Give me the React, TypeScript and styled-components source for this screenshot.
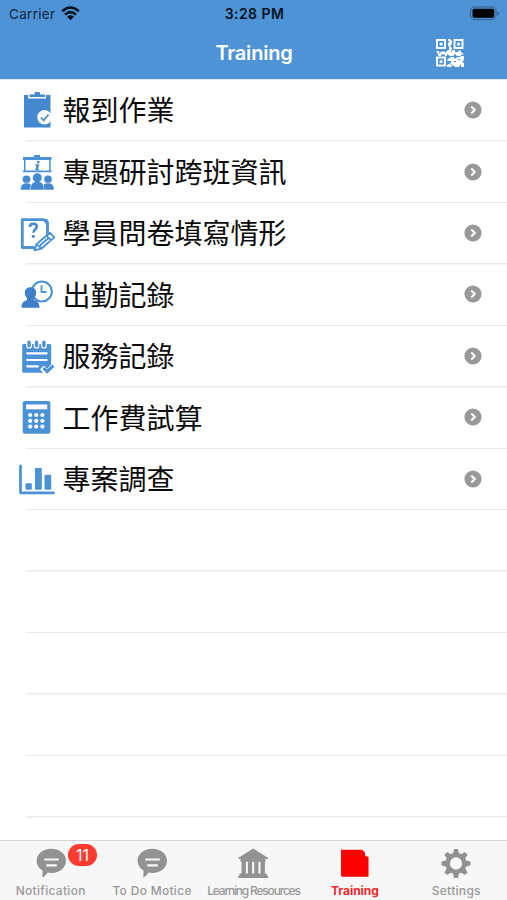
import React from 'react';
import styled, { createGlobalStyle } from 'styled-components';

const GlobalStyle = createGlobalStyle`
  * { box-sizing: border-box; }
  body { margin: 0; background: #fff; font-family: Inter, "Liberation Sans", sans-serif; }
`;

const Screen = styled.div`
  width: 507px;
  height: 900px;
  display: flex;
  flex-direction: column;
  overflow: hidden;
  background: #fff;
`;

const Header = styled.header`
  flex: none;
  height: 79px;
  background: #4d93d6;
`;

const StatusBar = styled.div`
  height: 27px;
  display: grid;
  grid-template-columns: 1fr auto 1fr;
  align-items: center;
  padding: 0 7px 0 9px;
`;

const Carrier = styled.div`
  display: flex;
  align-items: center;
  gap: 6px;
  font-size: 13.5px;
  letter-spacing: 0.3px;
  color: #14283c;
`;

const Clock = styled.div`
  font-size: 14px;
  font-weight: 600;
  letter-spacing: 0.42px;
  color: #07121d;
`;

const BatteryIcon = styled.svg`
  justify-self: end;
`;

const NavBar = styled.div`
  height: 51px;
  display: grid;
  grid-template-columns: 1fr auto 1fr;
  align-items: center;
  padding: 0 43px 0 44px;
`;

const Title = styled.h1`
  grid-column: 2;
  margin: 0;
  font-size: 20px;
  line-height: 24px;
  font-weight: 600;
  letter-spacing: -0.2px;
  color: #fff;
`;

const ScanIcon = styled.svg`
  justify-self: end;
`;

const List = styled.main`
  flex: 1;
  min-height: 0;
  overflow: hidden;
  padding-top: 0.4px;
  border-top: 1px solid #dfe7f0;
`;

const Row = styled.div`
  height: 61.45px;
  display: flex;
  align-items: center;
  padding: 0 25px 2px 16px;
  background: linear-gradient(#ebebec, #ebebec) 26px 100% / 100% 1.5px no-repeat;
`;

const RowIcon = styled.svg`
  flex: none;
  width: 40px;
  height: 40px;
  margin-right: 6.5px;
`;

const RowLabel = styled.span`
  flex: 1;
  padding-bottom: 1.6px;
  font-family: "Noto Sans CJK TC", sans-serif;
  font-size: 28px;
  line-height: 40px;
  color: #0a0a0a;
`;

const TabBar = styled.nav`
  flex: none;
  height: 60px;
  display: grid;
  grid-template-columns: repeat(5, 1fr);
  border-top: 1px solid #d5d5d6;
  background: #f7f7f7;
`;

const Tab = styled.div<{ $active?: boolean }>`
  position: relative;
  display: flex;
  flex-direction: column;
  align-items: center;
  color: ${p => (p.$active ? '#ff0000' : '#929292')};
`;

const TabIcon = styled.svg`
  width: 36px;
  height: 36px;
  margin-top: 5px;
`;

const TabLabel = styled.span<{ $spacing: number; $bold?: boolean }>`
  margin-top: 1px;
  font-size: 12px;
  line-height: 16px;
  font-weight: ${p => (p.$bold ? 700 : 500)};
  letter-spacing: ${p => p.$spacing}px;
  white-space: nowrap;
  color: ${p => (p.$bold ? '#f5262b' : '#989898')};
`;

const Badge = styled.span`
  position: absolute;
  top: 3px;
  left: 68px;
  width: 29px;
  height: 22px;
  border-radius: 11px;
  background: #ff3b30;
  color: #fff;
  font-size: 16px;
  line-height: 22px;
  text-align: center;
`;

const BLUE = '#4488cf';
const LIGHT = '#4a91d6';

const CheckIn = () => (
  <RowIcon viewBox="0 0 40 40">
    <path fill={BLUE} d="M8 5h4v3.5h18V5h4.5v32.5H8zM13.5 4.5h5V3q0-1 1-1h3.5q1 0 1 1v1.5h5V7h-15.5z" />
    <circle cx="28.5" cy="27.3" r="7.2" fill="#fff" />
    <path d="M24.8 27.5l2.8 3 5-6" fill="none" stroke={BLUE} strokeWidth="1.6" />
  </RowIcon>
);

const Seminar = () => (
  <RowIcon viewBox="0 0 40 40">
    <path fill={LIGHT} d="M7 5h11V3h6v2h11.5v3H7zM8 8h1.5v11H8zM33.2 8h1.5v11h-1.5zM7 18.5h28.5v1.8H7z" />
    <path fill={BLUE} d="M21 9h2.4v2.2H21zM19.5 12.2h3.7L22 17h1.2v1.2h-4L20.4 13.5h-1.2z" />
    <g fill={BLUE} stroke="#fff" strokeWidth=".5">
      <circle cx="10.5" cy="27.3" r="4.1" />
      <path d="M4.5 38c0-5 2-7 6-7s6.500 2 6.500 7z" />
      <circle cx="32" cy="27.3" r="4.1" />
      <path d="M26 38c0-5 2-7 6-7s6 2 6 7z" />
      <path d="M14.5 38c0-6 2-8.500 6.800-8.500S28 32 28 38z" />
      <circle cx="21.3" cy="25.7" r="4.5" stroke="none" />
    </g>
  </RowIcon>
);

const Survey = () => (
  <RowIcon viewBox="0 0 40 40">
    <path d="M31.5 22.5V10.500L28 6.700H6.300V34.500H17.500" fill="none" stroke={LIGHT} strokeWidth="2.800" strokeLinejoin="round" strokeLinecap="round" />
    <path d="M27 6h4l1.500 2v5z" fill={LIGHT} />
    <path d="M13.800 14c.2-2.300 1.600-3.200 3.500-3.200 2.100 0 3.500 1.200 3.500 3 0 2.700-3.400 2.400-3.400 6" fill="none" stroke={BLUE} strokeWidth="2.500" />
    <circle cx="17.400" cy="23.300" r="1.600" fill={BLUE} />
    <path d="M18.500 37.300l1.700-5.800L33.800 19.700l4.500 4.700-12.700 11.100zM30.500 22.700l4.500 4.700M20.800 31.500l4.700 3.800M24 32.500l8-7" fill="#fff" stroke={LIGHT} strokeWidth="1.900" strokeLinejoin="round" />
  </RowIcon>
);

const Attendance = () => (
  <RowIcon viewBox="0 0 40 40">
    <circle cx="25.800" cy="17.500" r="10" fill="#fff" stroke={LIGHT} strokeWidth="2" />
    <path d="M25.500 11.300v6.700h5" fill="none" stroke={LIGHT} strokeWidth="1.800" />
    <path fill="#3f7fc9" d="M14.500 13.200c3.700 0 5.900 2.500 5.700 5.900-.1 2.200-.9 3.900-2.100 5.100v1.700c3 1 5.400 2.700 5.400 7.800H5.500c0-5.100 2.600-6.800 5.500-7.800v-1.700c-1.300-1.200-2.100-2.900-2.200-5.100-.2-3.400 2-5.900 5.700-5.900z" />
  </RowIcon>
);

const ServiceLog = () => (
  <RowIcon viewBox="0 0 40 40">
    <rect x="6.200" y="8" width="29" height="28.700" rx="1.500" fill={LIGHT} />
    <g fill={LIGHT} stroke="#fff" strokeWidth="1.200">
      <rect x="10.800" y="4" width="4.600" height="8" rx="2.300" />
      <rect x="18.200" y="4" width="4.600" height="8" rx="2.300" />
      <rect x="25.600" y="4" width="4.600" height="8" rx="2.300" />
    </g>
    <path d="M11.300 17.300h19.400M11.300 24h19.400M11.300 30.400h10.500" stroke="#fff" strokeWidth="2.200" strokeLinecap="round" />
    <path d="M26 31.500l5.200 5.500 7.500-8.500" fill="none" stroke="#fff" strokeWidth="5.500" />
    <path d="M27.500 32l3.700 3.700 6.200-6" fill="none" stroke={LIGHT} strokeWidth="3" />
  </RowIcon>
);

const Calculator = () => (
  <RowIcon viewBox="0 0 40 40">
    <rect x="6.700" y="4" width="27.700" height="32.700" rx="2.300" fill={LIGHT} />
    <rect x="10" y="7.500" width="21.200" height="4.800" fill="#fff" />
    {[18, 23.8, 29.6].map(y => [14.2, 20.3, 26.4].map(x => <circle key={`${x}-${y}`} cx={x} cy={y} r="2.100" fill="#fff" />))}
  </RowIcon>
);

const Chart = () => (
  <RowIcon viewBox="0 0 40 40">
    <path d="M4.500 6.800v27h33" fill="none" stroke={LIGHT} strokeWidth="2.700" strokeLinecap="round" strokeLinejoin="round" />
    <g fill={LIGHT}>
      <rect x="9.500" y="24.200" width="6.300" height="6.500" rx="1" />
      <rect x="19" y="9" width="6.800" height="21.700" rx="1" />
      <rect x="28.500" y="15.800" width="6.700" height="14.900" rx="1" />
    </g>
  </RowIcon>
);

const Disclosure = () => (
  <svg width="18" height="18" viewBox="0 0 18 18">
    <circle cx="9" cy="9" r="8.600" fill="#999" />
    <path d="M7.300 5.500L10.800 9l-3.500 3.500" fill="none" stroke="#fff" strokeWidth="2" />
  </svg>
);

const Wifi = () => (
  <svg width="19" height="15" viewBox="0 0 19 15">
    <g fill="none" stroke="#07121d" strokeWidth="2.500">
      <path d="M1.200 5.300Q9.500-2.200 17.800 5.300" />
      <path d="M4 8.600Q9.500 3.700 15 8.600" />
    </g>
    <path d="M6 10.800Q9.500 7.900 13 10.800L9.500 14.300z" fill="#07121d" />
  </svg>
);

const Battery = () => (
  <BatteryIcon width="31" height="15" viewBox="0 0 31 15">
    <rect x="1.500" y="1" width="25.500" height="12.500" rx="4" fill="none" stroke="#396d9f" strokeWidth="1.300" />
    <rect x="3.500" y="2.800" width="21.700" height="9" rx="1.800" fill="#000" />
    <path d="M28.500 5q3 2.500 0 5z" fill="#2f5f90" />
  </BatteryIcon>
);

const QrCode = () => (
  <ScanIcon width="28" height="28" viewBox="0 0 28 28">
    <g fill="none" stroke="#fff" strokeWidth="1.900">
      <rect x="1" y="1" width="8" height="8" />
      <rect x="18.500" y="1" width="8" height="8" />
      <rect x="1" y="18.500" width="8" height="8" />
    </g>
    <path fill="#fff" d="M3.700 3.700h2.800v2.800H3.700zM21.200 3.700H24v2.800h-2.800zM3.700 21.200h2.800V24H3.700zM12 0h2l2 2v3l-2 2 2 2v2h-3V7h-1V4l2-2h-2zM0 12h3v2l3-1.500h3V14l3-3h3v2l2-2h2v2h3l1-1.500h2V13l3 2.500h-3V17h-4l-2-2-2 2h-3l-3-2v2H9v-1.500H5V17H2v-2zM12 20l3-2h3v2l4-2h2l1-1h3v4l-2 2 2 1v4h-3v-3l-2 3h-4l-2-2-2 2h-4v-2l4-2v-2h-4z" />
    <path fill="#4d93d6" d="M18 22h2v1h-2zM22 20h2v1h-2zM15 25h1v1h-1z" />
  </ScanIcon>
);

const Chat = () => (
  <TabIcon viewBox="0 0 36 36">
    <path fill="currentColor" d="M18.300 2.700C26.600 2.700 33 7.900 33 14.700S26.600 27 18.300 27c-1.300 0-2.500-.1-3.700-.4-1.800 2.900-4.300 4.600-5.500 4.900.5-1.700.5-4.500.3-7-3.600-2.200-5.800-5.700-5.800-9.800 0-6.800 6.400-12 14.700-12z" />
    <path d="M11.300 13.500h14.500M13.300 19.300h10.500" stroke="#f7f7f7" strokeWidth="2.200" />
  </TabIcon>
);

const Museum = () => (
  <TabIcon viewBox="0 0 36 36">
    <path fill="currentColor" d="M18.200 2.500l14.700 9.200V13H3.500v-1.300zM5.500 13h25v2.700h-25zM6.500 15.500h4.400V28H6.500zM12.900 15.500h4.200V28h-4.200zM19.200 15.500h4.200V28h-4.200zM25.500 15.500h4.400V28h-4.400zM4.500 27.500h27.200v2H33V32H3.500v-2.500h1z" />
  </TabIcon>
);

const Folder = () => (
  <TabIcon viewBox="0 0 36 36">
    <path fill="currentColor" d="M4 3.700h20.300q1 0 1.700.7l2 2.300v2q0 1.200 1.300 1.500l2.200.8V30.700H5.500q-1.500 0-1.500-1.500z" />
  </TabIcon>
);

const Gear = () => (
  <TabIcon viewBox="0 0 36 36">
    <g fill="currentColor">
      {[0, 45, 90, 135, 180, 225, 270, 315].map(a => (
        <path key={a} transform={`rotate(${a} 18 17.500)`} d="M14.800 9L15.800 4q.2-1 1-1h2.400q.8 0 1 1l1 5z" />
      ))}
    </g>
    <circle cx="18" cy="17.500" r="8.400" fill="none" stroke="currentColor" strokeWidth="4.500" />
  </TabIcon>
);

const items = [
  { label: '報到作業', Icon: CheckIn },
  { label: '專題研討跨班資訊', Icon: Seminar },
  { label: '學員問卷填寫情形', Icon: Survey },
  { label: '出勤記錄', Icon: Attendance },
  { label: '服務記錄', Icon: ServiceLog },
  { label: '工作費試算', Icon: Calculator },
  { label: '專案調查', Icon: Chart },
];

const tabs = [
  { label: 'Notification', Icon: Chat, spacing: 0.3, badge: '11' },
  { label: 'To Do Motice', Icon: Chat, spacing: 0.3 },
  { label: 'Learning Resources', Icon: Museum, spacing: -1.2 },
  { label: 'Training', Icon: Folder, spacing: -0.05, active: true },
  { label: 'Settings', Icon: Gear, spacing: 0.3 },
];

export default function App() {
  return (
    <Screen>
      <GlobalStyle />
      <Header>
        <StatusBar>
          <Carrier>Carrier<Wifi /></Carrier>
          <Clock>3:28 PM</Clock>
          <Battery />
        </StatusBar>
        <NavBar>
          <Title>Training</Title>
          <QrCode />
        </NavBar>
      </Header>
      <List>
        {items.map(({ label, Icon }) => (
          <Row key={label}>
            <Icon />
            <RowLabel>{label}</RowLabel>
            <Disclosure />
          </Row>
        ))}
        {[0, 1, 2, 3, 4].map(i => <Row key={i} />)}
      </List>
      <TabBar>
        {tabs.map(({ label, Icon, spacing, badge, active }) => (
          <Tab key={label} $active={active}>
            <Icon />
            <TabLabel $spacing={spacing} $bold={active}>{label}</TabLabel>
            {badge && <Badge>{badge}</Badge>}
          </Tab>
        ))}
      </TabBar>
    </Screen>
  );
}
